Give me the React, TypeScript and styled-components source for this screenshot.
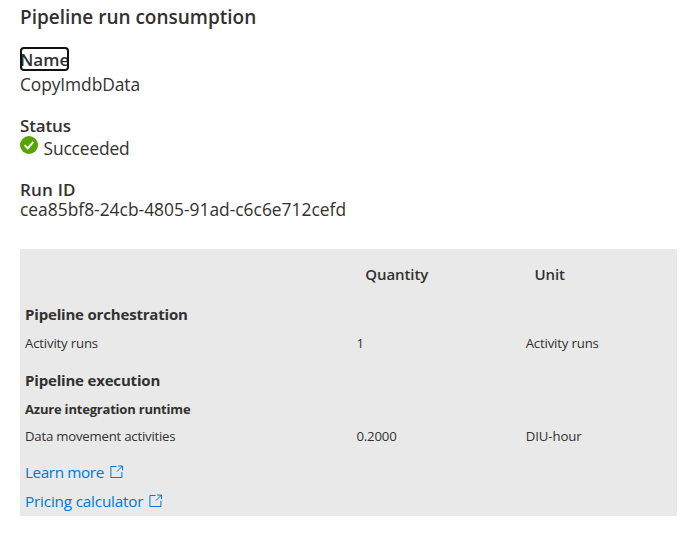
import React from "react";
import styled, { createGlobalStyle } from "styled-components";

const GlobalStyle = createGlobalStyle`
  * { box-sizing: border-box; }
  body {
    margin: 0;
    background: #fff;
    color: #323130;
    font-family: "Open Sans", "Noto Sans", sans-serif;
  }
`;

const Page = styled.main`
  display: flex;
  flex-direction: column;
  align-items: flex-start;
  width: 691px;
  height: 536px;
  padding: 5px 14px 0 20px;
  white-space: nowrap;
`;

const Title = styled.h1`
  margin: 0 0 18px;
  font-size: 19px;
  font-weight: 600;
  line-height: 24px;
  letter-spacing: -0.01px;
`;

const Label = styled.div<{ $line?: number; $track?: number }>`
  font-size: 17px;
  font-weight: 600;
  line-height: ${(p) => p.$line ?? 22}px;
  letter-spacing: ${(p) => p.$track ?? 0}px;
`;

const FocusedLabel = styled(Label)`
  width: 49px;
  height: 24px;
  line-height: 25px;
  outline: 2px solid #101010;
  outline-offset: -2px;
  border-radius: 4px;
`;

const Value = styled.div<{ $line?: number; $track?: number }>`
  font-size: 17.4px;
  line-height: ${(p) => p.$line ?? 22}px;
  letter-spacing: ${(p) => p.$track ?? 0}px;
`;

const Field = styled.section<{ $gap: number }>`
  display: flex;
  flex-direction: column;
  margin-bottom: ${(p) => p.$gap}px;
`;

const StatusRow = styled.div`
  display: flex;
  align-items: flex-start;
  gap: 5.5px;
`;

const Panel = styled.section`
  width: 657px;
  height: 267px;
  padding-left: 5px;
  background: #e9e9e9;
`;

const Row = styled.div<{ $height: number }>`
  display: grid;
  grid-template-columns: 331.5px 169.2px 1fr;
  height: ${(p) => p.$height}px;
  line-height: ${(p) => p.$height}px;
  font-size: 13.2px;
`;

const Cell = styled.span<{ $track?: number }>`
  letter-spacing: ${(p) => p.$track ?? 0}px;
`;

const HeaderCell = styled.span`
  padding-left: 8.8px;
  font-size: 15px;
  font-weight: 600;
  letter-spacing: -0.1px;
`;

const GroupTitle = styled.h2<{ $top?: number }>`
  margin: ${(p) => p.$top ?? 0}px 0 0;
  font-size: 15px;
  font-weight: 700;
  line-height: 30px;
  letter-spacing: -0.18px;
`;

const SubTitle = styled.h3`
  margin: 0;
  font-size: 13px;
  font-weight: 700;
  line-height: 28px;
  letter-spacing: -0.2px;
`;

const Links = styled.nav`
  display: flex;
  flex-direction: column;
  align-items: flex-start;
  gap: 1px;
  margin-top: 9px;
`;

const Link = styled.a<{ $track: number }>`
  display: flex;
  align-items: center;
  gap: 6px;
  height: 28px;
  color: #0078d4;
  font-size: 15.3px;
  line-height: 28px;
  letter-spacing: ${(p) => p.$track}px;
  text-decoration: none;
`;

const SuccessIcon = () => (
  <svg width="18" height="18" viewBox="0 0 18 18">
    <circle cx="9" cy="9" r="9" fill="#57a300" />
    <path d="M4.6 9.1 7.8 12.2 13.4 5.9" fill="none" stroke="#fff" strokeWidth="2" />
  </svg>
);

const ExternalIcon = () => (
  <svg width="14" height="14" viewBox="0 0 14 14" fill="none" stroke="#0078d4">
    <path d="M6.5 1.5H.9v11h11V7" />
    <path d="M8.2 1h4.3v4.3M12.4 1.1 6.9 6.6" />
  </svg>
);

export default function App() {
  return (
    <>
      <GlobalStyle />
      <Page>
        <Title>Pipeline run consumption</Title>
        <Field $gap={18}>
          <FocusedLabel>Name</FocusedLabel>
          <Value $line={26} $track={-0.1}>CopyImdbData</Value>
        </Field>
        <Field $gap={20}>
          <Label $line={21} $track={-0.15}>Status</Label>
          <StatusRow>
            <SuccessIcon />
            <Value $line={24} $track={-0.15}>Succeeded</Value>
          </StatusRow>
        </Field>
        <Field $gap={30}>
          <Label $line={19} $track={0.2}>Run ID</Label>
          <Value $line={20}>cea85bf8-24cb-4805-91ad-c6c6e712cefd</Value>
        </Field>
        <Panel>
          <Row $height={50}>
            <span />
            <HeaderCell>Quantity</HeaderCell>
            <HeaderCell>Unit</HeaderCell>
          </Row>
          <GroupTitle>Pipeline orchestration</GroupTitle>
          <Row $height={28}>
            <Cell $track={-0.17}>Activity runs</Cell>
            <Cell>1</Cell>
            <Cell $track={-0.17}>Activity runs</Cell>
          </Row>
          <GroupTitle $top={8}>Pipeline execution</GroupTitle>
          <SubTitle>Azure integration runtime</SubTitle>
          <Row $height={26}>
            <Cell $track={-0.22}>Data movement activities</Cell>
            <Cell $track={-0.2}>0.2000</Cell>
            <Cell $track={-0.1}>DIU-hour</Cell>
          </Row>
          <Links>
            <Link $track={-0.4}>Learn more <ExternalIcon /></Link>
            <Link $track={-0.19}>Pricing calculator <ExternalIcon /></Link>
          </Links>
        </Panel>
      </Page>
    </>
  );
}
